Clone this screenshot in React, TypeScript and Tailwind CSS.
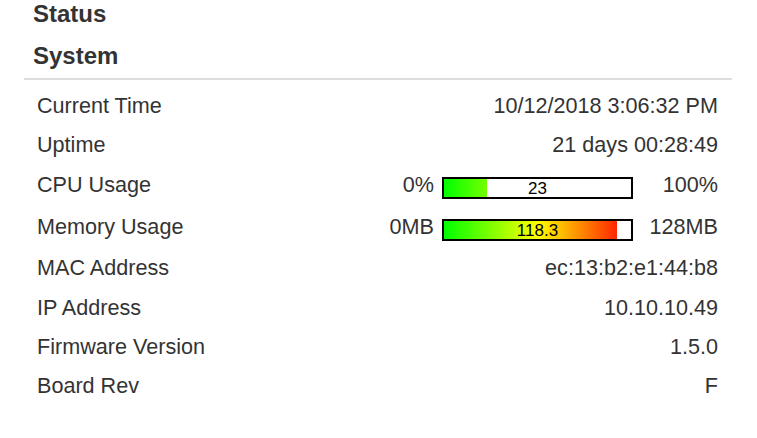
type Row = {
  label: string
  value?: string
  bar?: { min: string; max: string; pct: number; text: string }
  h: string
}

const rows: Row[] = [
  { label: "Current Time", value: "10/12/2018 3:06:32 PM", h: "h-[39.5px]" },
  { label: "Uptime", value: "21 days 00:28:49", h: "h-[40px]" },
  { label: "CPU Usage", bar: { min: "0%", max: "100%", pct: 23, text: "23" }, h: "h-[41.5px]" },
  {
    label: "Memory Usage",
    bar: { min: "0MB", max: "128MB", pct: (118.3 / 128) * 100, text: "118.3" },
    h: "h-[41.5px]",
  },
  { label: "MAC Address", value: "ec:13:b2:e1:44:b8", h: "h-[39.5px]" },
  { label: "IP Address", value: "10.10.10.49", h: "h-[39px]" },
  { label: "Firmware Version", value: "1.5.0", h: "h-[39px]" },
  { label: "Board Rev", value: "F", h: "h-[39px]" },
]

function Meter({ pct, text }: { pct: number; text: string }) {
  return (
    <div className="relative mt-[5px] h-[22px] w-[191px] border-2 border-black bg-white">
      <div className="h-full overflow-hidden" style={{ width: `${pct}%` }}>
        <div className="h-full w-[187px] bg-[linear-gradient(to_right,#00ff00,#ffff00_50%,#ff0000)]" />
      </div>
      <div className="absolute inset-0 flex items-center justify-center pt-px text-[17px] leading-none text-black">
        {text}
      </div>
    </div>
  )
}

export default function App() {
  return (
    <div className="min-h-[438px] bg-white font-['Liberation_Sans',Arial,sans-serif] text-[#333]">
      <div className="ml-[24px] w-[708px]">
        <h1 className="pl-[9px] text-[24px] font-bold leading-[27px]">Status</h1>
        <h2 className="mt-[15px] pl-[9px] text-[24px] font-bold leading-[27px]">System</h2>
        <div className="mt-[9px] h-[2px] bg-[#dddddd]" />
        <div className="pl-[13px] pr-[14px] pt-[12.5px]">
          {rows.map((r) => (
            <div key={r.label} className={`flex items-start justify-between text-[21.6px] leading-[25px] ${r.h}`}>
              <span>{r.label}</span>
              {r.bar ? (
                <div className="flex items-start">
                  <span className="mr-[8px]">{r.bar.min}</span>
                  <Meter pct={r.bar.pct} text={r.bar.text} />
                  <span className="w-[85px] text-right">{r.bar.max}</span>
                </div>
              ) : (
                <span>{r.value}</span>
              )}
            </div>
          ))}
        </div>
      </div>
    </div>
  )
}
